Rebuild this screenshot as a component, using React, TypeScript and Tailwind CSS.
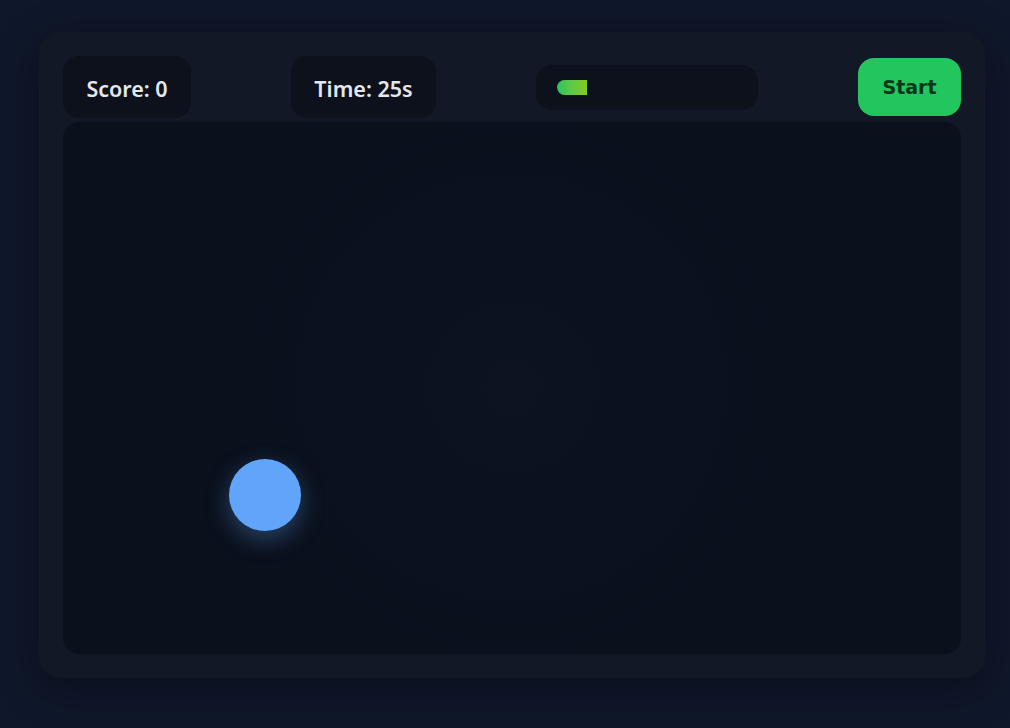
const score = 0;
const timeLeft = 25;
const progress = (30 - timeLeft) / 30;

export default function App() {
  return (
    <div className="min-h-screen w-full bg-[#0f172a] pt-8 px-[39px] font-['Noto_Sans',sans-serif]">
      <div className="w-[946px] h-[646px] rounded-[22px] bg-[#121826] p-6 flex flex-col gap-1 shadow-[0_10px_40px_rgba(0,0,0,0.35)]">
        {/* Header */}
        <div className="flex items-center justify-between h-[62px]">
          <div className="h-[62px] w-[128px] rounded-2xl bg-[#0c111c] flex items-center justify-center pt-1 text-[21.5px] font-semibold text-[#e5e7eb]">
            Score: {score}
          </div>
          <div className="h-[62px] w-[145px] rounded-2xl bg-[#0c111c] flex items-center justify-center pt-1 text-[21.5px] font-semibold text-[#e5e7eb]">
            Time: {timeLeft}s
          </div>
          <div className="h-[45px] w-[222px] rounded-2xl bg-[#0c111c] flex items-center px-[21px]">
            <div className="h-[15px] w-full rounded-full overflow-hidden">
              <div
                className="h-full bg-gradient-to-r from-[#22c55e] to-[#84cc16]"
                style={{ width: `${progress * 100}%` }}
              />
            </div>
          </div>
          <button className="h-[58px] w-[103px] rounded-2xl bg-[#22c55e] text-[#06361a] text-[19px] font-bold font-['DejaVu_Sans',sans-serif]">
            Start
          </button>
        </div>

        {/* Game area */}
        <div className="relative flex-1 rounded-2xl bg-[#0a101c] bg-[radial-gradient(circle_at_50%_50%,#0c1321_0%,#0a101c_55%)] overflow-hidden">
          <div className="absolute left-[166px] top-[337px] w-[72px] h-[72px] rounded-full bg-[#60a5fa] shadow-[0_8px_24px_rgba(96,165,250,0.35)]" />
        </div>
      </div>
    </div>
  );
}
